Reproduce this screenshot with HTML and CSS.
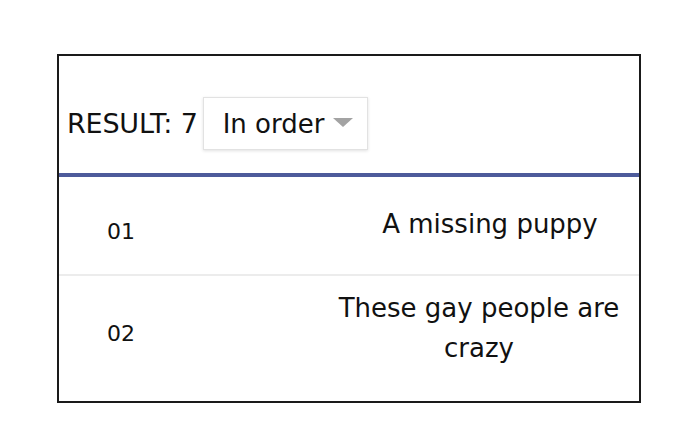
FILE: index.html
```html
<!DOCTYPE html>
<html lang="en">
<head>
    <meta charset="UTF-8">
    <meta name="viewport" content="width=device-width, initial-scale=1.0">
    <title>Results</title>
    <link rel="stylesheet" href="styles.css">
</head>
<body>
    <div class="panel">
        <div class="toolbar">
            <div class="result-count">RESULT: 7</div>
            <div class="sort-select">
                <span>In order</span>
                <span class="caret"></span>
            </div>
        </div>

        <div class="row first">
            <div class="row-num">01</div>
            <div class="row-title">A missing puppy</div>
        </div>
        <div class="row second">
            <div class="row-num">02</div>
            <div class="row-title">These gay people are<br>crazy</div>
        </div>
    </div>
</body>
</html>
```

FILE: styles.css
```css
body {
    margin: 0;
    background: #fff;
    color: #111;
    font-family: "Comic Sans MS", "DejaVu Sans", sans-serif;
}
.panel {
    box-sizing: border-box;
    width: 584px;
    height: 349px;
    margin: 54px 0 0 57px;
    border: 2px solid #1a1a1a;
    display: flex;
    flex-direction: column;
}
.toolbar {
    height: 121px;
    box-sizing: border-box;
    padding: 41px 0 0 8px;
    display: flex;
    align-items: flex-start;
    gap: 5px;
    border-bottom: 4px solid #4d5b9b;
}
.result-count {
    font-size: 27px;
    line-height: 53px;
    letter-spacing: -0.2px;
}
.sort-select {
    box-sizing: border-box;
    width: 165px;
    height: 53px;
    padding: 0 0 0 19px;
    display: flex;
    align-items: center;
    gap: 9px;
    border: 1px solid #e2e2e2;
    box-shadow: 0 1px 3px rgba(0, 0, 0, 0.12);
    font-size: 26px;
}
.caret {
    width: 0;
    height: 0;
    border-left: 10px solid transparent;
    border-right: 10px solid transparent;
    border-top: 9px solid #a3a3a3;
    margin-top: -2px;
}
.row {
    display: flex;
    align-items: center;
    padding: 0 10px 0 48px;
}
.row.first {
    box-sizing: border-box;
    height: 99px;
    border-bottom: 2px solid #ececec;
}
.row.second {
    flex: 1;
}
.row-num {
    font-size: 22px;
}
.row.first .row-num {
    margin-top: 12px;
}
.row.second .row-num {
    margin-top: -10px;
}
.row-title {
    box-sizing: border-box;
    margin-left: auto;
    width: 300px;
    text-align: center;
    font-size: 26px;
    line-height: 40px;
}
.row.first .row-title {
    margin-top: -4px;
    padding-left: 22px;
}
.row.second .row-title {
    margin-top: -22px;
}
```
